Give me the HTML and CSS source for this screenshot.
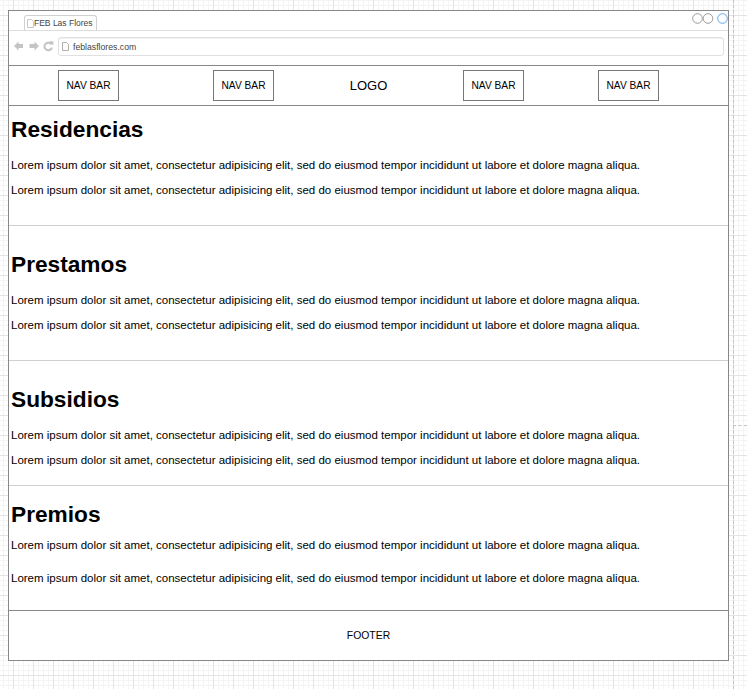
FILE: index.html
```html
<!DOCTYPE html>
<html lang="es">
<head>
<meta charset="utf-8">
<title>FEB Las Flores</title>
<link rel="stylesheet" href="styles.css">
</head>
<body>
<div class="window">
  <div class="tabbar">
    <div class="tab">
      <svg class="doc-icon" width="7" height="9" viewBox="0 0 7 9"><path d="M0.5 0.5 H4.5 L6.5 2.5 V8.5 H0.5 Z" fill="#fff" stroke="#c8c8c8"/></svg>
      <span class="tab__title">FEB Las Flores</span>
    </div>
    <svg class="controls" width="36" height="12" viewBox="0 0 36 12">
      <circle cx="5.5" cy="5.5" r="4.8" fill="none" stroke="#9a9a9a"/>
      <circle cx="16" cy="5.5" r="4.8" fill="none" stroke="#9a9a9a"/>
      <circle cx="30.5" cy="5.5" r="4.8" fill="none" stroke="#5aa9f0"/>
    </svg>
  </div>
  <div class="addressrow">
    <svg class="navicons" width="42" height="12" viewBox="0 0 42 12">
      <path d="M1 6 L5.5 1.5 V4 H10 V8 H5.5 V10.5 Z" fill="#c4c4c4"/>
      <path d="M26 6 L21.5 1.5 V4 H16.5 V8 H21.5 V10.5 Z" fill="#c4c4c4"/>
      <path d="M38.6 4.6 A3.8 3.8 0 1 0 38.9 7.6" fill="none" stroke="#c4c4c4" stroke-width="2"/>
      <path d="M36.2 1.2 L40.4 1.2 L40.4 5.4 Z" fill="#c4c4c4"/>
    </svg>
    <div class="address">
      <svg class="doc-icon" width="7" height="9" viewBox="0 0 7 9"><path d="M0.5 0.5 H4.5 L6.5 2.5 V8.5 H0.5 Z" fill="#fff" stroke="#b0b0b0"/></svg>
      <span class="address__url">feblasflores.com</span>
    </div>
  </div>
  <nav class="navbar">
    <div class="navbtn">NAV BAR</div>
    <div class="navbtn navbtn--wide-gap">NAV BAR</div>
    <div class="logo">LOGO</div>
    <div class="navbtn">NAV BAR</div>
    <div class="navbtn navbtn--mid-gap">NAV BAR</div>
  </nav>
  <main class="content">
    <section class="section section--first">
      <h1 class="section__title">Residencias</h1>
      <p class="section__text">Lorem ipsum dolor sit amet, consectetur adipisicing elit, sed do eiusmod tempor incididunt ut labore et dolore magna aliqua.</p>
      <p class="section__text section__text--second">Lorem ipsum dolor sit amet, consectetur adipisicing elit, sed do eiusmod tempor incididunt ut labore et dolore magna aliqua.</p>
    </section>
    <section class="section section--tall">
      <h1 class="section__title">Prestamos</h1>
      <p class="section__text">Lorem ipsum dolor sit amet, consectetur adipisicing elit, sed do eiusmod tempor incididunt ut labore et dolore magna aliqua.</p>
      <p class="section__text section__text--second">Lorem ipsum dolor sit amet, consectetur adipisicing elit, sed do eiusmod tempor incididunt ut labore et dolore magna aliqua.</p>
    </section>
    <section class="section section--mid">
      <h1 class="section__title">Subsidios</h1>
      <p class="section__text">Lorem ipsum dolor sit amet, consectetur adipisicing elit, sed do eiusmod tempor incididunt ut labore et dolore magna aliqua.</p>
      <p class="section__text section__text--second">Lorem ipsum dolor sit amet, consectetur adipisicing elit, sed do eiusmod tempor incididunt ut labore et dolore magna aliqua.</p>
    </section>
    <section class="section section--last">
      <h1 class="section__title">Premios</h1>
      <p class="section__text">Lorem ipsum dolor sit amet, consectetur adipisicing elit, sed do eiusmod tempor incididunt ut labore et dolore magna aliqua.</p>
      <p class="section__text section__text--second">Lorem ipsum dolor sit amet, consectetur adipisicing elit, sed do eiusmod tempor incididunt ut labore et dolore magna aliqua.</p>
    </section>
  </main>
  <footer class="footer">FOOTER</footer>
</div>
<div class="pagebreak pagebreak--v"></div>
<div class="pagebreak pagebreak--h"></div>
</body>
</html>
```
FILE: styles.css
```css
html, body {
  height: 100%;
}
html {
  background: #fff;
}
body {
  margin: 0;
  padding: 10px 0 0 8px;
  box-sizing: border-box;
  position: relative;
  overflow: hidden;
  font-family: "Liberation Sans", Arial, sans-serif;
  color: #000;
  background-color: #fff;
  background-image:
    linear-gradient(to right, #e4e4e4 1px, transparent 1px),
    linear-gradient(to bottom, #e4e4e4 1px, transparent 1px),
    linear-gradient(to right, #f4f4f4 1px, transparent 1px),
    linear-gradient(to bottom, #f4f4f4 1px, transparent 1px);
  background-size: 20px 20px, 20px 20px, 5px 5px, 5px 5px;
  background-position: 13px 0, 0 15px, 3px 0, 0 0;
}

.window {
  width: 721px;
  height: 651px;
  box-sizing: border-box;
  border: 1px solid #888;
  background: #fff;
  display: flex;
  flex-direction: column;
}

/* tab strip */
.tabbar {
  height: 19px;
  border-bottom: 1px solid #ddd;
  display: flex;
  align-items: flex-start;
  flex: none;
}
.tab {
  margin: 4px 0 0 15px;
  width: 73px;
  height: 15px;
  box-sizing: border-box;
  border: 1px solid #d0d0d0;
  border-bottom: 0;
  border-radius: 3px 3px 0 0;
  padding-left: 2px;
  display: flex;
  align-items: center;
}
.doc-icon {
  display: block;
  flex: none;
}
.tab__title {
  font-size: 8.5px;
  color: #444;
  white-space: nowrap;
  line-height: 10px;
}
.controls {
  display: block;
  margin: 2px 0 0 auto;
}

/* address row */
.addressrow {
  height: 34px;
  border-bottom: 1px solid #888;
  display: flex;
  align-items: flex-start;
  flex: none;
}
.navicons {
  display: block;
  margin: 9px 0 0 4px;
}
.address {
  margin: 6px 0 0 3px;
  width: 666px;
  height: 19px;
  box-sizing: border-box;
  border: 1px solid #e0e0e0;
  border-radius: 3px;
  box-shadow: inset 0 1px 0 #f2f2f2;
  padding-left: 3px;
  display: flex;
  align-items: center;
  gap: 4px;
}
.address__url {
  font-size: 8.7px;
  color: #444;
  line-height: 10px;
}

/* nav */
.navbar {
  height: 39px;
  border-bottom: 1px solid #888;
  padding-left: 49px;
  display: flex;
  align-items: center;
  flex: none;
}
.navbtn {
  width: 61px;
  height: 31px;
  box-sizing: border-box;
  border: 1px solid #777;
  display: flex;
  align-items: center;
  justify-content: center;
  font-size: 10.2px;
  white-space: nowrap;
}
.navbtn--wide-gap {
  margin-left: 94px;
}
.navbtn--mid-gap {
  margin-left: 74px;
}
.logo {
  width: 189px;
  text-align: center;
  font-size: 13px;
  line-height: 16px;
}

/* content */
.content {
  display: flex;
  flex-direction: column;
  flex: none;
}
.section {
  box-sizing: border-box;
  border-bottom: 1px solid #d0d0d0;
  padding-left: 2px;
  padding-top: 24px;
  height: 135px;
}
.section--first {
  height: 120px;
  padding-top: 9px;
}
.section--tall {
  height: 135px;
}
.section--mid {
  height: 125px;
}
.section--last {
  height: 124px;
  padding-top: 14px;
  border-bottom: 0;
}
.section__title {
  margin: 0;
  font-size: 22.7px;
  line-height: 28px;
  font-weight: bold;
}
.section__text {
  margin: 15px 0 0;
  font-size: 11.5px;
  line-height: 14px;
  white-space: nowrap;
}
.section__text--second {
  margin-top: 11px;
}
.section--last .section__text {
  margin-top: 10px;
}
.section--last .section__text--second {
  margin-top: 19px;
}

.footer {
  border-top: 1px solid #888;
  flex: 1;
  display: flex;
  align-items: center;
  justify-content: center;
  font-size: 10.4px;
}

/* page break guides of the canvas */
.pagebreak {
  position: absolute;
}
.pagebreak--v {
  left: 733px;
  top: 0;
  bottom: 0;
  border-left: 1px dashed #c4c4c4;
}
.pagebreak--h {
  left: 733px;
  right: 0;
  top: 425px;
  border-top: 1px dashed #c4c4c4;
}
```
